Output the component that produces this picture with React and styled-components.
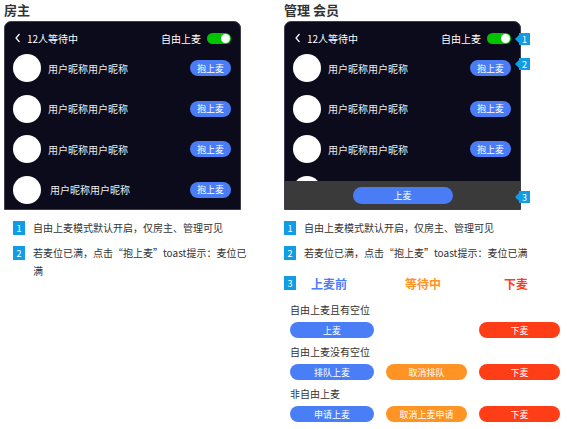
import styled, { createGlobalStyle } from "styled-components";

const GlobalStyle = createGlobalStyle`
  body {
    margin: 0;
    background: #fff;
    font-family: "Noto Sans CJK SC", "Noto Sans", sans-serif;
    color: #333;
  }
`;

const Page = styled.div`
  display: flex;
  gap: 30px;
  padding-left: 4px;
`;

const Column = styled.div`
  width: ${(p) => p.$width}px;
  display: flex;
  flex-direction: column;
`;

const Title = styled.div`
  font-size: 13px;
  font-weight: 700;
  line-height: 20px;
  height: 21px;
  color: #333;
`;

const Panel = styled.div`
  position: relative;
  width: 237px;
  height: 189px;
  box-sizing: border-box;
  background: #0c0b1b;
  border: 1px solid #3e3e48;
  border-radius: 7px 7px 0 0;
  padding-top: 6px;
`;

const Header = styled.div`
  height: 20px;
  display: flex;
  align-items: center;
  padding: 0 9px 0 9px;
  color: #fff;
  font-size: 10px;
`;

const Back = styled.svg`
  width: 8px;
  height: 10px;
  margin-right: 5px;
`;

const Spacer = styled.div`
  flex: 1;
`;

const Toggle = styled.div`
  width: 24px;
  height: 11px;
  border-radius: 6px;
  background: #00c400;
  margin-left: 6px;
  position: relative;
  &::after {
    content: "";
    position: absolute;
    right: 1px;
    top: 1px;
    width: 9px;
    height: 9px;
    border-radius: 50%;
    background: #fff;
  }
`;

const Row = styled.div`
  height: 40.5px;
  display: flex;
  align-items: center;
  padding: 0 9px 0 8px;
`;

const Avatar = styled.div`
  width: 28px;
  height: 28px;
  border-radius: 50%;
  background: #fff;
  flex-shrink: 0;
`;

const Name = styled.div`
  flex: 1;
  color: #eee;
  font-size: 10px;
  margin-left: ${(p) => (p.$shift ? 9 : 7)}px;
`;

const Pill = styled.div`
  width: ${(p) => p.$w}px;
  height: ${(p) => p.$h || 16}px;
  border-radius: 9px;
  background: ${(p) => p.$bg || "#4a7cf6"};
  color: #fff;
  font-size: 9px;
  display: flex;
  align-items: center;
  justify-content: center;
  flex-shrink: 0;
`;

const Overlay = styled.div`
  position: absolute;
  left: 0;
  right: 0;
  bottom: 0;
  height: 28px;
  background: #3a3a3a;
  display: flex;
  align-items: center;
  justify-content: center;
`;

const Badge = styled.div`
  width: 12px;
  height: 14px;
  background: #109de6;
  color: #fff;
  font-size: 9px;
  display: flex;
  align-items: center;
  justify-content: center;
  flex-shrink: 0;
`;

const SideBadge = styled(Badge)`
  position: absolute;
  left: calc(100% - 1px);
  top: ${(p) => p.$top}px;
  width: 11px;
  height: 12px;
  &::before {
    content: "";
    position: absolute;
    left: -4px;
    top: 2px;
    border-top: 4px solid transparent;
    border-bottom: 4px solid transparent;
    border-right: 4px solid #109de6;
  }
`;

const Notes = styled.div`
  display: flex;
  flex-direction: column;
  gap: 7px;
  margin-top: 9px;
`;

const Note = styled.div`
  display: flex;
  align-items: flex-start;
  gap: 8px;
  padding-left: ${(p) => p.$indent ?? 9}px;
`;

const NoteBadge = styled(Badge)`
  margin-top: 2px;
`;

const NoteText = styled.div`
  flex: 1;
  font-size: 10px;
  line-height: 18px;
  color: #333;
`;

const Legend = styled.div`
  display: grid;
  grid-template-columns: 12px 66px 122px 64px;
  align-items: center;
  height: 18px;
  margin-top: 12px;
`;

const LegendLabel = styled.div`
  text-align: center;
  font-size: 12px;
  font-weight: 700;
  color: ${(p) => p.$color};
`;

const Cases = styled.div`
  display: flex;
  flex-direction: column;
  padding-left: 6px;
  margin-top: 11px;
`;

const CaseLabel = styled.div`
  font-size: 10px;
  line-height: 14px;
  color: #333;
`;

const CaseRow = styled.div`
  display: grid;
  grid-template-columns: 84px 81px 81px;
  gap: 12px;
  margin: 5px 0 7px;
`;

const rows = [false, false, false, true];

const BLUE = "#4a7ef7";
const ORANGE = "#ff9424";
const RED = "#ff3d17";

function RoomPanel({ admin }) {
  return (
    <Panel>
      <Header>
        <Back viewBox="0 0 8 10">
          <path d="M5.5 1 L2 5 L5.5 9" stroke="#fff" strokeWidth="1.2" fill="none" />
        </Back>
        12人等待中
        <Spacer />
        自由上麦
        <Toggle />
      </Header>
      {rows.map((shift, i) => (
        <Row key={i}>
          <Avatar />
          <Name $shift={shift && !admin}>用户昵称用户昵称</Name>
          <Pill $w={41}>抱上麦</Pill>
        </Row>
      ))}
      {admin && (
        <>
          <Overlay>
            <Pill $w={100} $h={17}>上麦</Pill>
          </Overlay>
          <SideBadge $top={11}>1</SideBadge>
          <SideBadge $top={36}>2</SideBadge>
          <SideBadge $top={169}>3</SideBadge>
        </>
      )}
    </Panel>
  );
}

const cases = [
  { label: "自由上麦且有空位", btns: [["上麦", BLUE], null, ["下麦", RED]] },
  { label: "自由上麦没有空位", btns: [["排队上麦", BLUE], ["取消排队", ORANGE], ["下麦", RED]] },
  { label: "非自由上麦", btns: [["申请上麦", BLUE], ["取消上麦申请", ORANGE], ["下麦", RED]] },
];

export default function App() {
  return (
    <>
      <GlobalStyle />
      <Page>
        <Column $width={250}>
          <Title>房主</Title>
          <RoomPanel />
          <Notes>
            <Note>
              <NoteBadge>1</NoteBadge>
              <NoteText>自由上麦模式默认开启，仅房主、管理可见</NoteText>
            </Note>
            <Note>
              <NoteBadge>2</NoteBadge>
              <NoteText>若麦位已满，点击“抱上麦”toast提示：麦位已满</NoteText>
            </Note>
          </Notes>
        </Column>
        <Column $width={280}>
          <Title>管理 会员</Title>
          <RoomPanel admin />
          <Notes>
            <Note $indent={0}>
              <NoteBadge>1</NoteBadge>
              <NoteText>自由上麦模式默认开启，仅房主、管理可见</NoteText>
            </Note>
            <Note $indent={0}>
              <NoteBadge>2</NoteBadge>
              <NoteText>若麦位已满，点击“抱上麦”toast提示：麦位已满</NoteText>
            </Note>
          </Notes>
          <Legend>
            <Badge>3</Badge>
            <LegendLabel $color={BLUE}>上麦前</LegendLabel>
            <LegendLabel $color={ORANGE}>等待中</LegendLabel>
            <LegendLabel $color={RED}>下麦</LegendLabel>
          </Legend>
          <Cases>
            {cases.map((c) => (
              <div key={c.label}>
                <CaseLabel>{c.label}</CaseLabel>
                <CaseRow>
                  {c.btns.map((b, i) =>
                    b ? (
                      <Pill key={i} $w={i === 0 ? 84 : 81} $h={16} $bg={b[1]}>
                        {b[0]}
                      </Pill>
                    ) : (
                      <div key={i} />
                    )
                  )}
                </CaseRow>
              </div>
            ))}
          </Cases>
        </Column>
      </Page>
    </>
  );
}
